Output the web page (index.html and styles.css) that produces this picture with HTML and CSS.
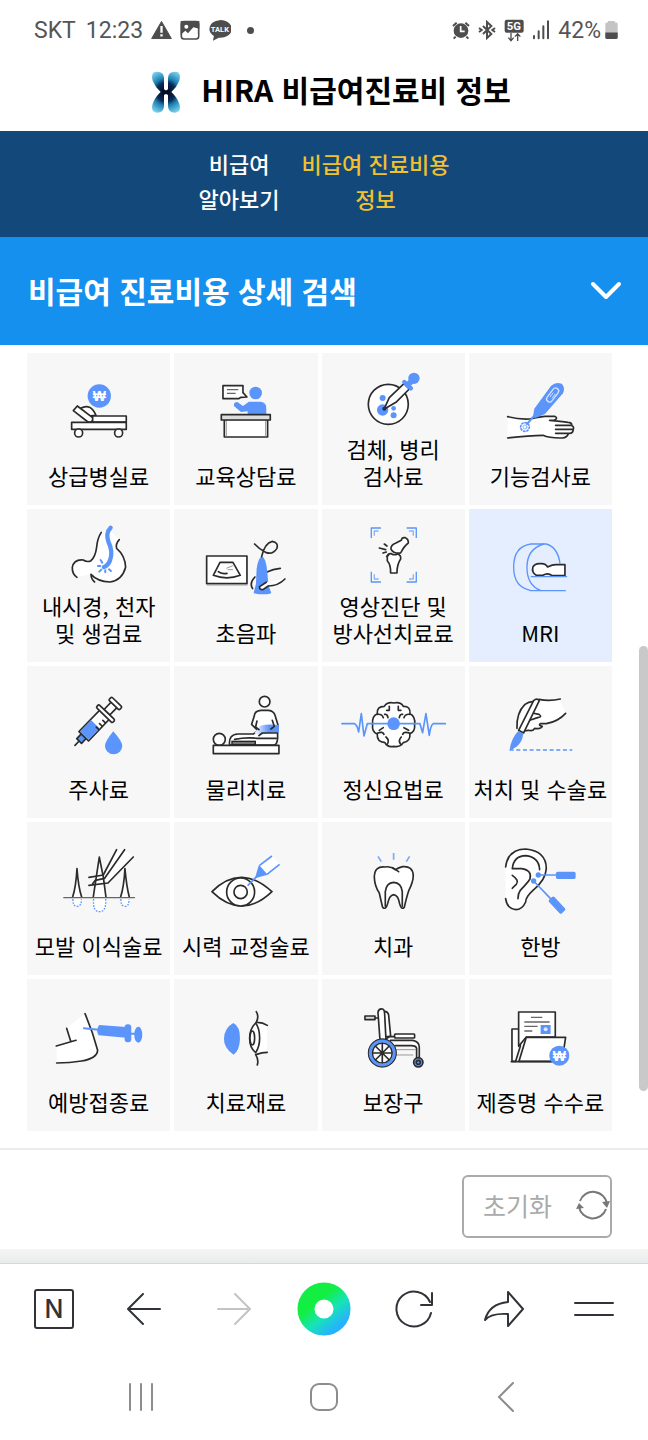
FILE: index.html
```html
<!DOCTYPE html>
<html lang="ko">
<head>
    <meta charset="UTF-8">
    <meta name="viewport" content="width=device-width, initial-scale=1.0">
    <title>HIRA 비급여진료비 정보</title>
    <link rel="stylesheet" href="styles.css">
</head>
<body>
    <div class="status-bar">
        <div class="status-group">
            <span class="carrier">SKT</span>
            <span class="clock">12:23</span>
            <svg width="21" height="20" viewBox="456 60 64 60"><path d="M488 64L518 116H458Z" fill="#4d4d4d" stroke="#4d4d4d" stroke-width="3" stroke-linejoin="round"/><path d="M488 78V98M488 103V110" stroke="#fff" stroke-width="7"/></svg>
            <svg width="20" height="20" viewBox="544 60 60 60"><rect x="548" y="65" width="52" height="52" rx="8" fill="#fff" stroke="#4d4d4d" stroke-width="5"/><path d="M546 63H602V86L584 82L568 100L560 92L546 104Z" fill="#4d4d4d"/><circle cx="563" cy="80" r="6" fill="#fff"/><path d="M552 108L561 97L568 106L584 88L597 103V112H552Z" fill="#fff"/></svg>
            <svg width="23" height="23" viewBox="622 56 70 70"><path d="M637 122L640 108A34 27 0 1 1 655 113Z" fill="#4d4d4d"/><text x="658" y="95" class="talk-text">TALK</text></svg>
            <span class="more-dot"></span>
        </div>
        <div class="status-group">
            <svg width="18" height="20" viewBox="386 60 54 60"><circle cx="413" cy="92" r="22" fill="#4d4d4d"/><path d="M389 78L400 68M437 78L426 68" stroke="#4d4d4d" stroke-width="6"/><path d="M397 110L391 116M429 110L435 116" stroke="#4d4d4d" stroke-width="6"/><path d="M412 78V94H424" fill="none" stroke="#fff" stroke-width="5"/></svg>
            <svg width="18" height="20" viewBox="465 60 54 60"><path d="M480 78L505 102L492 114V66L505 78L480 102" fill="none" stroke="#4d4d4d" stroke-width="6"/><path d="M468 84L476 90L468 96M516 84L508 90L516 96" fill="none" stroke="#4d4d4d" stroke-width="6"/></svg>
            <svg width="20" height="23" viewBox="544 52 60 69"><rect x="546" y="54" width="57" height="39" rx="6" fill="#4d4d4d"/><text x="574" y="86" class="net-text">5G</text><path d="M565 94V116M557 108L565 117L573 108M585 118V97M577 105L585 96L593 105" fill="none" stroke="#4d4d4d" stroke-width="4"/></svg>
            <svg width="18" height="20" viewBox="624 60 54 60"><path d="M630 108V115M644 94V115M658 79V115M672 64V115" stroke="#4d4d4d" stroke-width="6" stroke-linecap="round"/></svg>
            <span class="battery">
                42%
                <svg width="13" height="20" viewBox="842 60 40 60"><path d="M851 62H872V67H878Q881 67 881 72V112Q881 118 875 118H849Q843 118 843 112V72Q843 67 847 67H851Z" fill="#c4c4c4"/><path d="M843 98H881V112Q881 118 875 118H849Q843 118 843 112Z" fill="#4d4d4d"/></svg>
            </span>
        </div>
    </div>

    <header class="site-header">
        <svg class="logo" width="30" height="42" viewBox="465 205 90 126">
            <defs>
                <radialGradient id="logoFill" gradientUnits="userSpaceOnUse" cx="510" cy="268" r="68">
                    <stop offset="0.1" stop-color="#040b25"/>
                    <stop offset="0.42" stop-color="#0b2b57"/>
                    <stop offset="0.6" stop-color="#1c80b2"/>
                    <stop offset="1" stop-color="#7ed3ec"/>
                </radialGradient>
            </defs>
            <g fill="url(#logoFill)">
                <path d="M494 268Q478 254 470 234Q463 207 482 207Q503 206 504 225V260L511 264V273L504 277V311Q503 331 482 330Q463 328 470 303Q478 282 494 268Z"/>
                <path d="M526 268Q542 254 550 234Q557 207 538 207Q517 206 516 225V260L509 264V273L516 277V311Q517 331 538 330Q557 328 550 303Q542 282 526 268Z"/>
            </g>
        </svg>
        <h1>HIRA 비급여진료비 정보</h1>
    </header>

    <nav class="site-nav">
        <a href="#about">비급여<br>알아보기</a>
        <a href="#cost" class="active">비급여 진료비용<br>정보</a>
    </nav>

    <main>
        <button type="button" class="search-toggle">
            비급여 진료비용 상세 검색
            <svg width="32" height="20" viewBox="0 0 32 20"><path d="M3 4L16 17L29 4" fill="none" stroke="#fff" stroke-width="4" stroke-linecap="round" stroke-linejoin="round"/></svg>
        </button>

        <div class="category-grid">
            <button type="button" class="category">
                <svg viewBox="21 39 430 216">
                    <circle class="blue" cx="238" cy="138" r="35"/>
                    <text x="238" y="153" class="won">₩</text>
                    <path class="line" d="M182 175Q212 158 228 196L205 198Z"/>
                    <path class="line" d="M160 182L172 168L222 206L214 216H204Z"/>
                    <rect class="line" x="218" y="198" width="101" height="18"/>
                    <rect class="line" x="155" y="217" width="164" height="21"/>
                    <circle class="line" cx="176" cy="249" r="12"/>
                    <circle class="line" cx="296" cy="249" r="12"/>
                </svg>
                <span>상급병실료</span>
            </button>
            <button type="button" class="category">
                <svg viewBox="463 39 430 216">
                    <path class="line" d="M610 107H670V128L682 141L664 142L657 146H610Z"/>
                    <path class="gray" d="M622 119H656M622 130H648"/>
                    <circle class="blue" cx="708" cy="129" r="19"/>
                    <path class="blue" d="M684 192V184L664 186L643 168Q641 156 653 156L670 168L688 155H724Q740 157 740 174V192Z"/>
                    <rect class="line" x="614" y="208" width="130" height="53"/>
                    <path class="gray thin" d="M620 210V259M738 210V259"/>
                    <rect class="line shade" x="605" y="194" width="147" height="16"/>
                </svg>
                <span>교육상담료</span>
            </button>
            <button type="button" class="category">
                <svg viewBox="16 39 430 216">
                    <circle class="line" cx="215" cy="163" r="60"/>
                    <circle class="blue" cx="198" cy="144" r="9"/>
                    <circle class="blue" cx="198" cy="180" r="17"/>
                    <circle class="blue" cx="231" cy="175" r="7"/>
                    <circle class="blue" cx="231" cy="196" r="9"/>
                    <path class="line" d="M202 178L218 143L262 101L278 117L238 157Z"/>
                    <circle cx="203" cy="176" r="6" fill="#1c2f5c"/>
                    <path class="blue-line" d="M263 96L283 115" stroke-width="13"/>
                    <path class="blue-line" d="M274 104L290 88" stroke-width="17"/>
                    <circle class="blue" cx="292" cy="85" r="17"/>
                </svg>
                <span>검체, 병리<br>검사료</span>
            </button>
            <button type="button" class="category">
                <svg viewBox="458 39 430 216">
                    <path class="white" d="M574 200Q610 209 640 207Q665 201 685 199H715L720 210L765 222L770 240L735 263L680 256L574 264Z"/>
                    <path class="line open" d="M574 200Q610 209 640 207Q665 201 685 199H715Q727 204 714 211H700Q735 214 755 217Q768 218 766 226M718 226H764Q774 228 771 238H718M771 238Q770 250 760 250H718M757 250Q752 264 738 264Q700 265 680 256Q640 256 574 264"/>
                    <circle cx="626" cy="231" r="13" class="blue-line" stroke-width="5" stroke-dasharray="4 6"/>
                    <circle cx="626" cy="231" r="6" class="blue-line" stroke-width="2"/>
                    <path class="blue-line" d="M655 196L632 222" stroke-width="6"/>
                    <path class="blue" d="M650 202L654 176L704 108Q718 94 736 101Q748 112 740 130L686 192L658 204Z"/>
                    <rect x="-24" y="-9" width="48" height="18" rx="9" transform="translate(709 135) rotate(-53)" fill="none" stroke="#d5e3ff" stroke-width="4"/>
                    <path d="M701 141L711 128M707 145L717 132" stroke="#d5e3ff" stroke-width="3"/>
                </svg>
                <span>기능검사료</span>
            </button>

            <button type="button" class="category">
                <svg viewBox="21 40 430 216">
                    <path class="white" d="M244 80L230 125L215 165L190 163Q158 165 157 190L170 215L213 205L235 222Q270 235 308 212Q330 170 290 128L296 102L272 75Z"/>
                    <path class="line open" d="M244 80Q232 98 230 125Q226 155 212 166Q200 170 190 163Q162 160 157 185Q156 205 171 215M298 102Q286 115 290 128Q316 150 317 185Q306 225 270 229Q232 227 213 206Q214 222 224 229"/>
                    <path class="blue-line" d="M272 66Q256 82 266 110Q280 138 270 165Q264 180 252 184" stroke-width="13"/>
                    <path class="blue-line" d="M242 163L247 171M234 181H241M238 198L244 192M256 200V194M273 196L267 191" stroke-width="6"/>
                </svg>
                <span>내시경, 천자<br>및 생검료</span>
            </button>
            <button type="button" class="category">
                <svg viewBox="463 40 430 216">
                    <rect class="line" x="561" y="151" width="121" height="83"/>
                    <path class="gray thin" d="M561 238H684"/>
                    <path class="line" d="M601 170H640L662 209Q622 224 581 209Z"/>
                    <path class="line open" d="M596 198Q605 206 622 203"/>
                    <path class="gray thin" d="M620 188L640 180M624 192H640"/>
                    <path class="line open" d="M706 214Q688 232 699 249M742 199Q760 190 782 188"/>
                    <path class="blue" d="M727 152Q740 158 743 200L747 240L755 261Q752 266 730 266Q706 266 702 261L709 235L711 190Q715 158 727 152Z"/>
                    <path class="line open" d="M726 153Q735 112 758 107Q777 110 772 128Q760 147 740 141Q718 130 705 115"/>
                    <path class="line" d="M796 220Q775 241 746 241L730 252Q718 252 720 243L740 230"/>
                </svg>
                <span>초음파</span>
            </button>
            <button type="button" class="category">
                <svg viewBox="16 40 430 216">
                    <path class="blue-line sq" d="M164 97V67H193M270 67H299V97M164 198V229H193M270 229H299V198" stroke-width="4"/>
                    <path class="blue-line sq" d="M173 90V76H186M277 76H290V90M173 206V220H186M277 220H290V206" stroke-width="4" opacity=".7"/>
                    <path class="line" d="M252 142Q230 144 223 130Q222 118 238 112L254 104Q256 94 266 96Q276 100 275 112Q262 122 252 142Z"/>
                    <path class="line" d="M212 152Q214 143 224 144Q234 150 242 145Q254 148 252 160Q241 176 241 202H222Q223 178 212 165Z"/>
                    <path class="line open" d="M188 127L207 132M203 115L211 121M199 142L209 139M210 152L216 148"/>
                </svg>
                <span>영상진단 및<br>방사선치료료</span>
            </button>
            <button type="button" class="category selected" aria-pressed="true">
                <svg viewBox="458 40 430 216">
                    <path class="blue-line" d="M672 255H644Q592 245 592 185Q592 122 644 115H690Q724 125 731 172" stroke-width="4"/>
                    <path class="blue-line" d="M682 115Q632 130 632 185Q632 240 674 255H747" stroke-width="4"/>
                    <path class="line" d="M660 209Q645 200 650 184Q656 172 674 174Q688 173 694 184Q710 176 722 177H746V210H708Q694 200 680 209Z"/>
                    <path class="blue-line" d="M645 213H751" stroke-width="4"/>
                </svg>
                <span>MRI</span>
            </button>

            <button type="button" class="category">
                <svg viewBox="21 35 430 216">
                    <g transform="translate(165 243) rotate(-46)">
                        <path class="line" d="M0 0H18"/>
                        <rect class="line blue" x="18" y="-10" width="20" height="20"/>
                        <rect class="line" x="38" y="-20" width="92" height="40"/>
                        <rect class="blue" x="40" y="-18" width="48" height="36"/>
                        <path class="line open" d="M84 18V8M98 18V8M112 18V8"/>
                        <rect class="line" x="138" y="-12" width="32" height="24"/>
                        <rect class="line" x="126" y="-34" width="12" height="68" rx="5"/>
                        <rect class="line" x="168" y="-22" width="13" height="44" rx="4"/>
                    </g>
                    <path class="blue" d="M280 201Q307 232 307 244A26 26 0 0 1 255 244Q255 232 280 201Z"/>
                </svg>
                <span>주사료</span>
            </button>
            <button type="button" class="category">
                <svg viewBox="463 35 430 216">
                    <defs>
                        <linearGradient id="kneeFill"><stop offset="0" stop-color="#fff"/><stop offset=".6" stop-color="#5b94fa"/></linearGradient>
                    </defs>
                    <path class="line" d="M724 138Q704 140 704 155L696 180L712 196H760L776 185L766 152Q762 140 747 138Z"/>
                    <circle class="line" cx="735" cy="112" r="16"/>
                    <path class="line" d="M630 242Q626 210 655 209H702L724 190H774V222Q772 241 764 242Z"/>
                    <path d="M704 206L722 184Q745 178 778 182V205Q745 203 722 212Z" fill="url(#kneeFill)"/>
                    <path class="line open" d="M712 170L708 188L718 196M758 168L764 186L754 194M718 214L728 206H772M645 225Q680 218 712 222H770"/>
                    <rect x="637" y="231" width="70" height="10" fill="#777" stroke="#222" stroke-width="4"/>
                    <circle class="line" cx="599" cy="225" r="18"/>
                    <rect class="line" x="581" y="243" width="197" height="25"/>
                </svg>
                <span>물리치료</span>
            </button>
            <button type="button" class="category">
                <svg viewBox="16 35 430 216">
                    <path class="line" d="M203 126Q212 112 232 116Q252 112 260 126Q282 125 280 148Q297 156 294 180Q296 202 280 208Q282 232 260 235Q250 250 232 246Q212 250 205 235Q180 232 182 210Q165 202 168 180Q165 155 182 148Q180 126 203 126Z"/>
                    <path class="line open" d="M218 126V138H210M245 126V138H253M182 150Q196 148 200 160M280 150Q266 148 262 160M204 150Q212 148 214 160M258 150Q250 148 248 160M182 207Q198 200 202 210M280 207Q262 200 258 210M212 240Q220 228 208 218M252 240Q244 228 254 218M188 198L200 190M276 198L262 190"/>
                    <path class="blue-line" d="M76 178H114Q122 182 126 203L134 148L142 215L152 178H310L318 205L328 148L338 213Q342 182 350 178H386" stroke-width="5"/>
                    <circle class="blue" cx="231" cy="178" r="19"/>
                </svg>
                <span>정신요법료</span>
            </button>
            <button type="button" class="category">
                <svg viewBox="458 35 430 216">
                    <path class="white" d="M603 190L620 130L655 112L730 105L748 147L700 178L620 200Z"/>
                    <path class="line open" d="M602 192Q600 145 626 120Q640 110 652 112M668 105Q700 112 732 104M748 147Q725 172 690 178L672 178Q665 184 678 186Q672 196 655 192Q650 202 636 198L622 200M648 146L668 150Q680 158 664 160L640 168"/>
                    <path class="line" d="M607 198L652 109Q662 100 669 109L622 206Z"/>
                    <path class="blue" d="M606 200L621 208Q618 232 602 246Q590 256 580 258Q584 222 606 200Z"/>
                    <path class="blue-line sq" d="M580 257H768" stroke-width="5" stroke-dasharray="12 8"/>
                </svg>
                <span>처치 및 수술료</span>
            </button>

            <button type="button" class="category">
                <svg viewBox="21 505 430 216">
                    <path class="white" d="M159 704Q158 728 171 728Q185 728 184 704ZM221 704Q218 744 238 744Q260 744 257 704ZM303 704Q302 728 315 728Q328 728 327 704Z"/>
                    <path class="white" d="M290 558L250 640L262 658L340 580L314 558Z"/>
                    <path class="line" d="M158 700Q168 670 171 615Q175 670 185 700M220 700Q226 660 238 580Q252 640 258 700M302 700Q312 670 315 615Q320 670 328 700"/>
                    <path class="blue-line sq" d="M159 706Q158 728 171 728Q185 728 184 706M221 706Q218 744 238 744Q260 744 257 706M303 706Q302 728 315 728Q328 728 327 706" stroke-width="4" stroke-dasharray="5 4"/>
                    <path class="line open" d="M290 558L250 634L207 641M314 558L254 644L226 650L218 660M340 580L264 658L207 665"/>
                    <path class="gray" d="M130 702H345" stroke-width="7"/>
                </svg>
                <span>모발 이식술료</span>
            </button>
            <button type="button" class="category">
                <svg viewBox="463 505 430 216">
                    <path class="line" d="M577 684Q620 640 667 641Q712 642 757 684Q712 727 667 727Q620 727 577 684Z"/>
                    <circle class="line" cx="663" cy="685" r="42"/>
                    <circle class="line" cx="663" cy="685" r="20"/>
                    <path class="white" d="M718 605L755 576L781 602L742 632Z"/>
                    <path class="blue-line sq" d="M684 666L716 634M720 605L757 577M742 632L780 602" stroke-width="5"/>
                    <path class="blue" d="M718 603L744 633L706 644Z"/>
                </svg>
                <span>시력 교정술료</span>
            </button>
            <button type="button" class="category">
                <svg viewBox="16 505 430 216">
                    <path class="line" d="M205 610Q174 606 173 640Q174 668 188 688Q194 715 198 731Q208 740 213 720Q218 695 231 693Q245 695 249 720Q254 740 263 731Q270 700 276 682Q290 655 290 635Q288 606 258 609Q246 612 236 618Q222 607 205 610Z"/>
                    <path class="line open" d="M206 728V684Q209 657 231 656Q254 657 257 684V728M228 612L246 624"/>
                    <path class="blue-line sq" d="M184 578L194 594M231 568V588M279 578L269 594" stroke-width="5" opacity=".8"/>
                </svg>
                <span>치과</span>
            </button>
            <button type="button" class="category">
                <svg viewBox="458 505 430 216">
                    <path class="white" d="M568 610Q575 556 628 556Q690 562 690 615Q688 650 650 680Q628 700 628 715Q618 738 598 738Q572 735 568 705Z"/>
                    <path class="line open" d="M568 610Q575 556 628 556Q690 562 690 615Q688 650 650 680Q628 700 628 715Q618 738 598 738Q572 735 568 705"/>
                    <path class="line open" d="M588 615Q592 577 628 576Q668 580 670 618M588 615H616Q648 620 641 646Q635 656 612 680Q605 690 605 705M588 635Q610 650 600 662Q592 669 588 674"/>
                    <circle class="blue" cx="666" cy="634" r="8"/>
                    <circle class="blue" cx="652" cy="652" r="8"/>
                    <path class="blue-line" d="M666 634H722M652 652L705 707" stroke-width="5"/>
                    <rect class="blue" x="719" y="624" width="59" height="22" rx="5"/>
                    <rect class="blue" x="0" y="-11" width="56" height="22" rx="5" transform="translate(703 704) rotate(47)"/>
                </svg>
                <span>한방</span>
            </button>

            <button type="button" class="category">
                <svg viewBox="21 38 430 216">
                    <path class="white" d="M110 208L152 192L140 155L195 112L233 225Q228 250 110 260Z"/>
                    <path class="line open" d="M109 209L168 192M140 156L152 194M195 112Q218 165 233 222Q231 246 185 254Q150 260 110 260"/>
                    <path class="blue-line" d="M192 156L236 160M318 172H350" stroke-width="6"/>
                    <path class="blue" d="M238 146L318 152V184L236 177Q226 160 238 146Z"/>
                    <rect class="blue" x="314" y="144" width="20" height="54" rx="9"/>
                    <ellipse class="blue" cx="355" cy="175" rx="12" ry="24"/>
                </svg>
                <span>예방접종료</span>
            </button>
            <button type="button" class="category">
                <svg viewBox="463 38 430 216">
                    <path class="blue" d="M641 140Q662 150 661 188Q660 222 642 235Q612 215 613 187Q614 155 641 140Z"/>
                    <path class="white" d="M710 138L742 147V228L708 234Z"/>
                    <path class="line open" d="M710 106Q719 120 710 138Q728 137 743 147M743 228Q728 228 708 235Q718 250 713 266"/>
                    <path class="line" d="M708 140Q690 158 690 186Q690 215 708 229Q720 212 720 186Q720 155 708 140Z"/>
                    <ellipse class="line" cx="698" cy="185" rx="7" ry="21"/>
                </svg>
                <span>치료재료</span>
            </button>
            <button type="button" class="category">
                <svg viewBox="16 38 430 216">
                    <path class="line open" d="M175 125H186"/>
                    <rect class="line shade" x="145" y="119" width="30" height="11"/>
                    <path class="line" d="M200 105Q214 104 216 116L222 178L206 190Z"/>
                    <path class="line" d="M184 108Q186 96 198 98Q204 100 204 112L208 190H190Z"/>
                    <path class="line" d="M208 181H234M222 192H288Q308 196 308 212V245H300V216Q298 208 284 208H236"/>
                    <path class="gray thin" d="M238 220H298M238 236H290"/>
                    <rect class="line" x="234" y="173" width="60" height="12" rx="2"/>
                    <circle class="line" cx="197" cy="230" r="40"/>
                    <path class="line open" d="M197 196V264M163 230H231M173 206L221 254M173 254L221 206"/>
                    <circle class="line open" cx="197" cy="230" r="30"/>
                    <circle class="line open" cx="197" cy="230" r="41"/>
                    <circle class="blue-line" cx="197" cy="230" r="36" stroke-width="9"/>
                    <circle class="line blue" cx="305" cy="258" r="14"/>
                    <circle class="line open" cx="305" cy="258" r="6"/>
                </svg>
                <span>보장구</span>
            </button>
            <button type="button" class="category">
                <svg viewBox="458 38 430 216">
                    <path class="line" d="M587 255V158H612V210L598 255Z"/>
                    <path class="line" d="M607 210V107H717V182H630Z"/>
                    <path class="gray" d="M644 123H678M624 137H700M624 150H664M624 164H648"/>
                    <rect class="blue" x="673" y="146" width="30" height="27"/>
                    <circle cx="688" cy="159" r="6" fill="#dbe8ff"/>
                    <path class="line" d="M608 255L630 183H748L737 255Z"/>
                    <path class="line open" d="M585 256H706"/>
                    <circle class="blue" cx="729" cy="238" r="30"/>
                    <text x="729" y="253" class="won">₩</text>
                </svg>
                <span>제증명 수수료</span>
            </button>
        </div>

        <div class="form-actions">
            <button type="button" class="reset">
                초기화
                <svg width="34" height="34" viewBox="0 0 34 34"><path d="M4 13A14 14 0 0 1 31 16M30 21A14 14 0 0 1 3 19" fill="none" stroke="#777" stroke-width="2"/><path d="M26 14L31 20L34 13ZM0 21L3 15L8 20Z" fill="#777"/></svg>
            </button>
        </div>
        <div class="scroll-thumb"></div>
    </main>

    <footer>
        <div class="page-end"></div>
        <div class="toolbar">
            <button type="button" aria-label="네이버 홈"><svg width="42" height="42" viewBox="0 0 42 42"><rect x="2" y="2" width="38" height="38" rx="2"/><text x="21" y="30" class="n-text">N</text></svg></button>
            <button type="button" aria-label="뒤로"><svg width="34" height="34" viewBox="0 0 34 34"><path d="M33 17H1M16 2L1 17L16 32"/></svg></button>
            <button type="button" aria-label="앞으로" class="off"><svg width="34" height="34" viewBox="0 0 34 34"><path d="M1 17H33M18 2L33 17L18 32"/></svg></button>
            <button type="button" aria-label="그린닷">
                <svg width="54" height="54" viewBox="0 0 54 54">
                    <defs>
                        <linearGradient id="dotFill" x1=".2" y1=".1" x2=".9" y2=".95"><stop offset=".2" stop-color="#13ee43"/><stop offset=".6" stop-color="#17e3b8"/><stop offset="1" stop-color="#25b4fb"/></linearGradient>
                    </defs>
                    <circle cx="27" cy="27" r="18" stroke="url(#dotFill)" stroke-width="17"/>
                </svg>
            </button>
            <button type="button" aria-label="새로고침"><svg width="40" height="40" viewBox="0 0 40 40"><path d="M37 24A17.5 17.5 0 1 1 36 13M38 4V16H27"/></svg></button>
            <button type="button" aria-label="공유"><svg width="42" height="38" viewBox="0 0 42 38"><path d="M25 2L40 19L25 36V24Q8 23 2 30Q6 14 25 12Z"/></svg></button>
            <button type="button" aria-label="메뉴"><svg width="40" height="18" viewBox="0 0 40 18"><path d="M1 3H39M1 15H39"/></svg></button>
        </div>
        <div class="system-nav">
            <button type="button" aria-label="최근 앱"><svg width="28" height="28" viewBox="0 0 28 28"><path d="M3 1V27M14 1V27M25 1V27"/></svg></button>
            <button type="button" aria-label="홈"><svg width="28" height="28" viewBox="0 0 28 28"><rect x="1" y="1" width="26" height="26" rx="8"/></svg></button>
            <button type="button" aria-label="이전"><svg width="28" height="30" viewBox="0 0 28 30"><path d="M20 1L6 15L20 29"/></svg></button>
        </div>
    </footer>
</body>
</html>
```
FILE: styles.css
```css
*,
*::before,
*::after {
    box-sizing: border-box;
}

body {
    font-family: "Noto Sans CJK KR", "Noto Sans", sans-serif;
    background: #fff;
    color: #111;
    margin: 0;
    min-height: 100vh;
    display: flex;
    flex-direction: column;
}

button {
    font-family: inherit;
    color: inherit;
    background: none;
    border: none;
    padding: 0;
    cursor: pointer;
}

svg {
    display: block;
    flex-shrink: 0;
}

/* status bar */
.status-bar {
    display: flex;
    justify-content: space-between;
    align-items: center;
    height: 60px;
    padding: 0 30px 0 34px;
    font-family: Roboto, sans-serif;
    font-size: 23px;
    color: #555;
}

.status-group {
    display: flex;
    align-items: center;
    gap: 8px;
}

.carrier {
    margin-right: 2px;
}

.battery {
    display: flex;
    align-items: center;
    gap: 4px;
}

.more-dot {
    width: 7px;
    height: 7px;
    margin-left: 8px;
    border-radius: 50%;
    background: #4d4d4d;
}

.talk-text {
    font: bold 23px Roboto, sans-serif;
    fill: #fff;
    text-anchor: middle;
}

.net-text {
    font: bold 34px Roboto, sans-serif;
    fill: #fff;
    text-anchor: middle;
}

/* header */
.site-header {
    display: flex;
    justify-content: center;
    align-items: center;
    gap: 20px;
    padding: 3px 0 15px 14px;
}

.logo {
    margin-top: 4px;
}

h1 {
    margin: 0;
    font-size: 30px;
    line-height: 53px;
    font-weight: 700;
    color: #000;
}

.site-nav {
    display: flex;
    justify-content: center;
    gap: 22px;
    padding: 15px 0 21px;
    background: #13487b;
}

.site-nav a {
    color: #fff;
    font-size: 22px;
    font-weight: 500;
    line-height: 35px;
    text-align: center;
    text-decoration: none;
}

.site-nav .active {
    color: #f0c030;
}

/* search panel */
main {
    position: relative;
    flex: 1;
}

.search-toggle {
    display: flex;
    justify-content: space-between;
    align-items: center;
    width: 100%;
    height: 108px;
    padding: 0 26px 3px 28px;
    background: #1590ef;
    color: #fff;
    font-size: 30px;
    font-weight: 700;
}

.category-grid {
    display: grid;
    grid-template-columns: repeat(4, 1fr);
    gap: 4px;
    padding: 8px 36px 17px 27px;
    border-bottom: 2px solid #ececec;
}

.category {
    display: flex;
    flex-direction: column;
    justify-content: space-between;
    aspect-ratio: 47 / 50;
    padding: 10px 0 16px;
    background: #f7f7f7;
    font-size: 22px;
    line-height: 27px;
    color: #000;
    text-align: center;
}

.category span {
    width: 100%;
    white-space: nowrap;
}

.category.selected {
    background: #e4eefe;
}

.category svg {
    width: 100%;
    height: 72px;
    overflow: visible;
}

/* category icons */
.line {
    fill: #fff;
    stroke: #2b2b2b;
    stroke-width: 5;
    stroke-linejoin: round;
    stroke-linecap: round;
}

.line.open {
    fill: none;
}

.line.shade {
    fill: #ddd;
}

.white {
    fill: #fff;
}

.gray {
    fill: none;
    stroke: #666;
    stroke-width: 4;
}

.gray.thin {
    stroke: #999;
    stroke-width: 3;
}

.blue {
    fill: #5b94fa;
}

.blue-line {
    fill: none;
    stroke: #5b94fa;
    stroke-linecap: round;
    stroke-linejoin: round;
}

.blue-line.sq {
    stroke-linecap: butt;
}

.won {
    font: bold 42px "Liberation Sans", sans-serif;
    fill: #fff;
    text-anchor: middle;
}

/* reset */
.form-actions {
    display: flex;
    justify-content: flex-end;
    padding: 25px 36px 11px;
}

.reset {
    display: flex;
    align-items: center;
    gap: 24px;
    height: 63px;
    padding: 0 0 2px 19px;
    border: 2px solid #aaa;
    border-radius: 6px;
    font-size: 25px;
    color: #aaa;
}

.scroll-thumb {
    position: absolute;
    top: 409px;
    right: 0;
    width: 9px;
    height: 445px;
    border-radius: 5px;
    background: #c9c9c9;
}

/* browser toolbar */
.page-end {
    height: 15px;
    background: linear-gradient(#f5f5f4, #e9ebec);
    border-bottom: 1px solid #d6d9dc;
}

.toolbar,
.system-nav {
    display: grid;
    grid-template-columns: repeat(7, 1fr);
    height: 90px;
    padding: 0 9px;
}

.toolbar button,
.system-nav button {
    display: flex;
    justify-content: center;
    align-items: center;
}

.toolbar svg {
    fill: none;
    stroke: #303338;
    stroke-width: 2;
    stroke-linecap: round;
    stroke-linejoin: round;
}

.toolbar .off svg {
    stroke: #c4c4c4;
}

.n-text {
    font: 500 25px Inter, sans-serif;
    fill: #303338;
    stroke: none;
    text-anchor: middle;
}

.system-nav {
    grid-template-columns: repeat(3, 1fr);
    height: 86px;
    padding: 0 50px;
}

.system-nav svg {
    fill: none;
    stroke: #8d8d8d;
    stroke-width: 2;
    stroke-linecap: round;
}
```
